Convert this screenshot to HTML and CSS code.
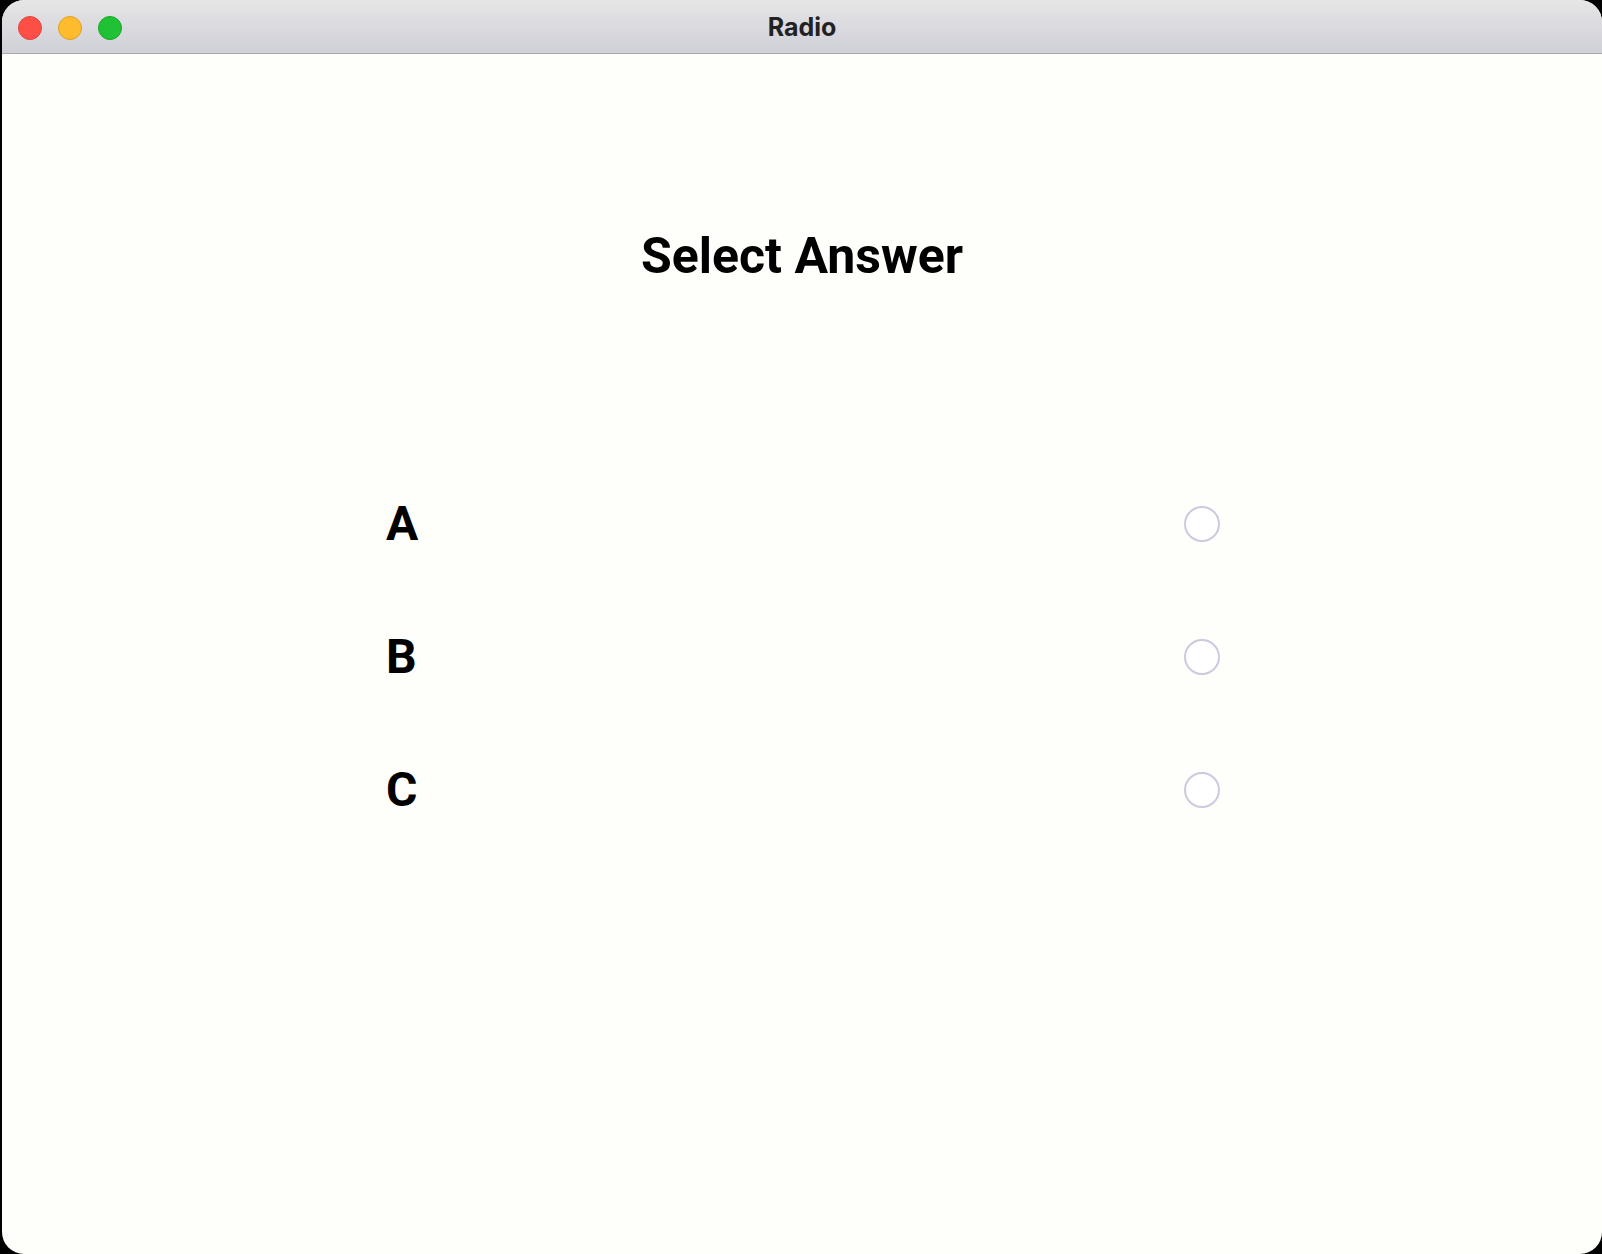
FILE: index.html
```html
<!DOCTYPE html>
<html>
<head>
<meta charset="utf-8">
<title>Radio</title>
<link rel="stylesheet" href="styles.css">
</head>
<body>
<div class="window">
  <div class="titlebar">
    <div class="lights">
      <span class="light red"></span>
      <span class="light yellow"></span>
      <span class="light green"></span>
    </div>
    <div class="wtitle">Radio</div>
  </div>
  <div class="content">
    <h1 class="heading">Select Answer</h1>
    <div class="options">
      <label class="option"><span class="opt-label">A</span><span class="radio"></span></label>
      <label class="option"><span class="opt-label">B</span><span class="radio"></span></label>
      <label class="option"><span class="opt-label">C</span><span class="radio"></span></label>
    </div>
  </div>
</div>
</body>
</html>
```

FILE: styles.css
```css
* { box-sizing: border-box; }
html, body {
  margin: 0;
  padding: 0;
  background: #000;
  height: 1254px;
  overflow: hidden;
}
.window {
  margin-left: 2px;
  width: 1600px;
  height: 1254px;
  border-radius: 22px;
  overflow: hidden;
  background: #fefefa;
  display: flex;
  flex-direction: column;
  font-family: Roboto, "Liberation Sans", sans-serif;
}
.titlebar {
  position: relative;
  height: 54px;
  flex: none;
  background: linear-gradient(#e6e6e6, #d8d8de 60%, #d0d0d8);
  border-bottom: 1px solid #a8a8a8;
  display: flex;
  align-items: center;
  justify-content: center;
}
.lights {
  position: absolute;
  left: 16px;
  top: 16px;
  display: flex;
  gap: 16px;
}
.light {
  width: 24px;
  height: 24px;
  border-radius: 50%;
  display: block;
}
.red { background: #fe4f47; border: 1px solid #e0443e; }
.yellow { background: #febb2d; border: 1px solid #dfa023; }
.green { background: #1fc234; border: 1px solid #1aa62b; }
.wtitle {
  font-family: Inter, "Noto Sans", sans-serif;
  font-weight: 700;
  font-size: 25px;
  color: #222;
}
.content {
  display: flex;
  flex-direction: column;
  align-items: center;
}
.heading {
  margin: 173px 0 0 0;
  font-size: 50px;
  line-height: 58px;
  font-weight: 700;
  color: #000;
}
.options {
  margin-top: 172px;
  width: 834px;
  margin-left: 2px;
  display: flex;
  flex-direction: column;
}
.option {
  height: 133px;
  display: flex;
  align-items: center;
  justify-content: space-between;
}
.opt-label {
  font-size: 48px;
  font-weight: 700;
  color: #000;
  line-height: 56px;
}
.radio {
  width: 36px;
  height: 36px;
  border-radius: 50%;
  border: 2px solid #cbcbe0;
  background: #fff;
}
```
